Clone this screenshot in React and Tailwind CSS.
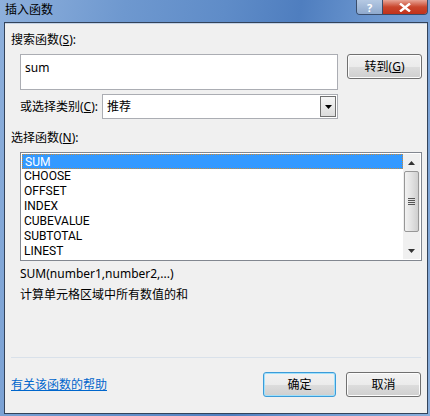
import React from 'react';

const font = { fontFamily: '"Noto Sans", "Noto Sans CJK SC", sans-serif' };

const functions = ['SUM', 'CHOOSE', 'OFFSET', 'INDEX', 'CUBEVALUE', 'SUBTOTAL', 'LINEST'];

// Win7 style push button
function WinButton({ children, focused = false, className = '' }) {
    return (
        <div
            className={`flex items-center justify-center rounded-[3px] border text-[12px] text-black ${
                focused ? 'border-[#3c9bd8] shadow-[inset_0_0_0_1px_#9fe0fb]' : 'border-[#707070] shadow-[inset_0_0_0_1px_#fcfcfc]'
            } bg-[linear-gradient(#f2f2f2_0%,#ebebeb_50%,#dddddd_51%,#cfcfcf_100%)] ${className}`}
        >
            {children}
        </div>
    );
}

export default function App() {
    return (
        <div
            className="relative w-[430px] h-[416px] overflow-hidden bg-[linear-gradient(100deg,#8eb0dc_0%,#6e98cf_25%,#5f8cc8_45%,#4f7ebf_60%,#6b96cf_75%,#8aaedb_100%)]"
            style={font}
        >
            {/* Title bar */}
            <div className="flex h-[22px] items-start">
                <span className="ml-[5px] mt-[2px] text-[12px] leading-[16px] text-black">插入函数</span>
                <div className="ml-auto mr-[2px] flex h-[15px] overflow-hidden rounded-b-[4px] border border-t-0 border-[#3a4d6b]">
                    <div className="flex w-[26px] items-center justify-center border-r border-[#3a4d6b] bg-[linear-gradient(#b5c9e3,#8fa9cd)] text-[11px] font-bold leading-none text-white">
                        ?
                    </div>
                    <div className="flex w-[44px] items-center justify-center bg-[linear-gradient(#e8a597,#c9462c_50%,#c2321b)]">
                        <svg width="12" height="9" viewBox="0 0 12 9">
                            <path d="M1 0.5 L11 8.5 M11 0.5 L1 8.5" stroke="#fff" strokeWidth="2.4" />
                        </svg>
                    </div>
                </div>
            </div>

            {/* Client area */}
            <div className="ml-[4px] h-[392px] w-[424px] border border-[#33435a] bg-[#f0f0f0] shadow-[inset_0_1px_0_#c3d2e6]">
                <div className="flex flex-col pl-[6px] pt-[9px] text-[12px] leading-[15px] text-black">
                    <div className="h-[15px]">
                        搜索函数(<span className="underline">S</span>):
                    </div>

                    <div className="mt-[7px] flex items-start">
                        <div className="ml-[9px] h-[36px] w-[318px] border border-[#abadb3] bg-white px-[4px] pt-[5px] text-[12px]">
                            sum
                        </div>
                        <WinButton className="ml-[9px] h-[25px] w-[75px]">
                            转到(<span className="underline">G</span>)
                        </WinButton>
                    </div>

                    <div className="mt-[4px] flex items-center">
                        <span className="ml-[9px] w-[82px]">
                            或选择类别(<span className="underline">C</span>):
                        </span>
                        <div className="flex h-[25px] w-[236px] items-center border border-[#abadb3] bg-white pl-[4px]">
                            <span>推荐</span>
                            <div className="ml-auto mr-[1px] flex h-[21px] w-[16px] items-center justify-center border border-[#707070] bg-[linear-gradient(#f6f6f6,#dcdcdc)]">
                                <svg width="7" height="4" viewBox="0 0 7 4">
                                    <path d="M0 0 H7 L3.5 4 Z" fill="#000" />
                                </svg>
                            </div>
                        </div>
                    </div>

                    <div className="mt-[11px] h-[15px]">
                        选择函数(<span className="underline">N</span>):
                    </div>

                    {/* Function list */}
                    <div className="ml-[9px] mt-[7px] flex h-[109px] w-[402px] border border-[#828790] bg-white p-[1px]">
                        <div className="flex-1 font-['Roboto',sans-serif]">
                            {functions.map((fn, i) => (
                                <div
                                    key={fn}
                                    className={`h-[15px] pl-[2px] text-[12px] leading-[15px] ${
                                        i === 0 ? 'border border-dotted border-[#c98a3a] bg-[#3399ff] pl-[1px] leading-[13px] text-white' : 'text-black'
                                    }`}
                                >
                                    {fn}
                                </div>
                            ))}
                        </div>
                        {/* Scrollbar */}
                        <div className="flex w-[17px] flex-col bg-[#f0f0f0]">
                            <div className="flex h-[17px] items-center justify-center">
                                <svg width="7" height="4" viewBox="0 0 7 4">
                                    <path d="M0 4 H7 L3.5 0 Z" fill="#333" />
                                </svg>
                            </div>
                            <div className="mx-[1px] flex h-[61px] items-center justify-center rounded-[2px] border border-[#979797] bg-[linear-gradient(90deg,#f2f2f2,#e2e2e2_50%,#cfcfcf)]">
                                <svg width="7" height="8" viewBox="0 0 7 8">
                                    <path d="M0 0.5 H7 M0 2.5 H7 M0 4.5 H7 M0 6.5 H7" stroke="#555" strokeWidth="1" />
                                </svg>
                            </div>
                            <div className="flex-1" />
                            <div className="flex h-[17px] items-center justify-center">
                                <svg width="7" height="4" viewBox="0 0 7 4">
                                    <path d="M0 0 H7 L3.5 4 Z" fill="#333" />
                                </svg>
                            </div>
                        </div>
                    </div>

                    <div className="ml-[9px] mt-[5px] h-[15px]">SUM(number1,number2,...)</div>
                    <div className="ml-[9px] mt-[6px] h-[15px]">计算单元格区域中所有数值的和</div>

                    {/* Separator */}
                    <div className="mr-[6px] mt-[55px] h-px bg-[#d9e1ea]" />

                    <div className="mt-[14px] flex items-start">
                        <span className="mt-[5px] cursor-pointer text-[#0066cc] underline">有关该函数的帮助</span>
                        <WinButton focused className="ml-auto h-[25px] w-[73px]">
                            确定
                        </WinButton>
                        <WinButton className="ml-[10px] mr-[6px] h-[25px] w-[75px]">取消</WinButton>
                    </div>
                </div>
            </div>
        </div>
    );
}
